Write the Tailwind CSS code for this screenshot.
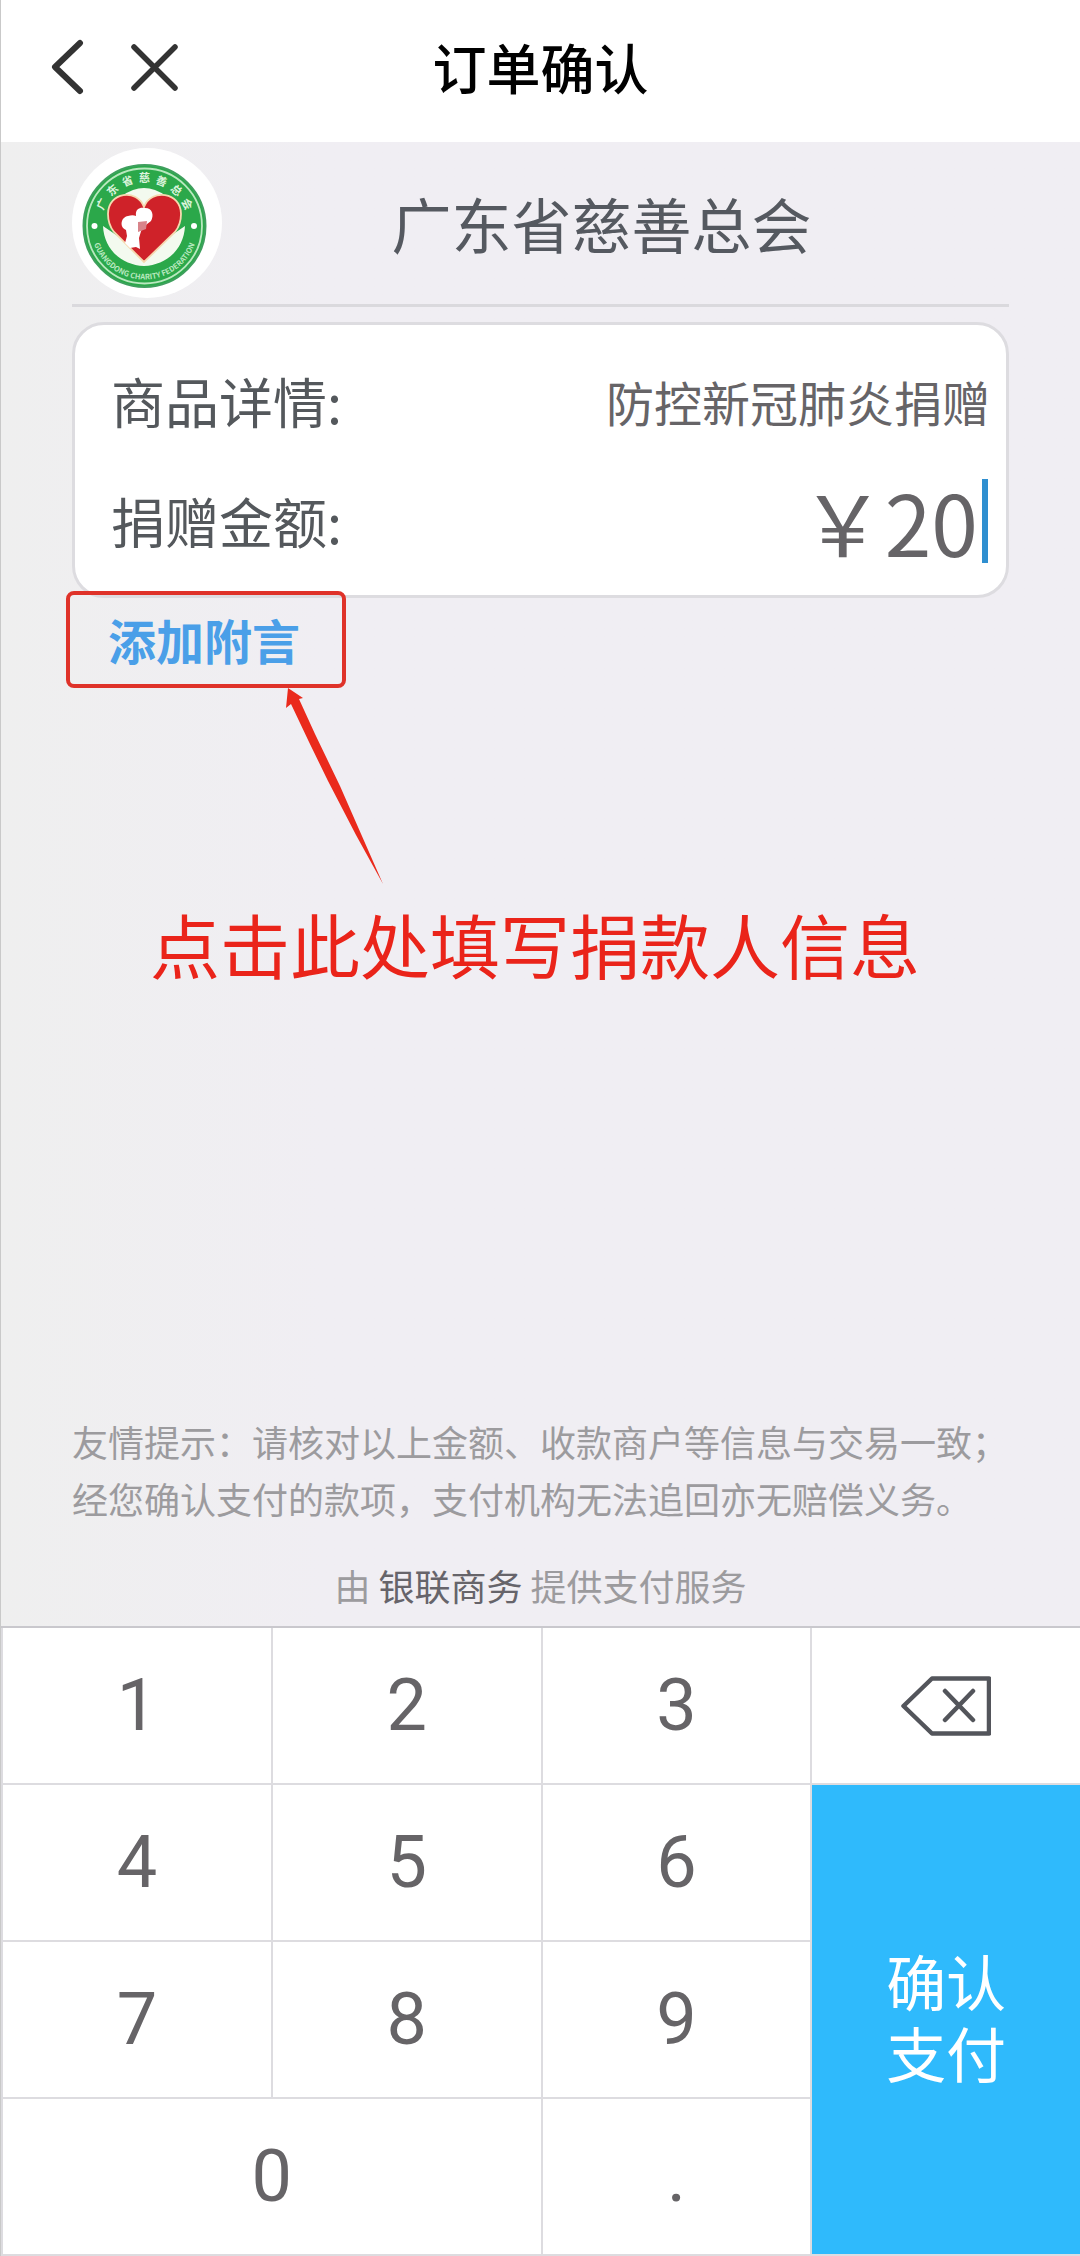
<!DOCTYPE html>
<html lang="zh-CN">
<head>
<meta charset="utf-8">
<meta name="viewport" content="width=device-width, initial-scale=1">
<title>订单确认</title>
<script src="https://cdn.jsdelivr.net/npm/@tailwindcss/browser@4"></script>
</head>
<body class="flex min-h-screen flex-col border-l border-[#c9c9c9] bg-linear-to-r from-[#efefef] to-[#f0eef3] to-30% font-['Noto_Sans_CJK_SC',sans-serif]">

<header class="grid h-[142px] grid-cols-[1fr_auto_1fr] items-center bg-white pb-2">
  <div class="flex items-center gap-[45px] pl-12">
    <button type="button" aria-label="返回">
      <svg class="h-14 w-9" viewBox="0 0 36 56" fill="none" stroke="#333" stroke-width="6" stroke-linecap="round" stroke-linejoin="round"><path d="M31 4 6 28l25 24"/></svg>
    </button>
    <button type="button" aria-label="关闭">
      <svg class="h-12 w-12" viewBox="0 0 48 48" fill="none" stroke="#333" stroke-width="5.500" stroke-linecap="round"><path d="M4 4l41 41M45 4 4 45"/></svg>
    </button>
  </div>
  <h1 class="text-[54px] font-medium leading-[72px] text-black">订单确认</h1>
</header>

<main class="flex flex-1 flex-col px-[71px] pt-1.5">
  <div class="flex items-center border-b-3 border-[#dad9dd] pb-1.5">
    <svg class="h-[150px] w-[150px]" viewBox="0 0 150 150" role="img" aria-label="广东省慈善总会会徽">
      <defs>
        <path id="arcTop" d="M28.500 78a44 44 0 0 1 88 0"/>
        <path id="arcBottom" d="M19 78a53.500 53.500 0 0 0 107 0"/>
      </defs>
      <circle cx="75" cy="75" r="75" fill="#fff"/>
      <circle cx="72.500" cy="78" r="61" fill="#2ba84a" stroke="#3f9f5e" stroke-width="2"/>
      <circle cx="72.500" cy="78" r="57.500" fill="none" stroke="#b9e8bf" stroke-width="1.800"/>
      <path d="M31 78c1 23 18 39 41 40 23-1 40-17 41-40L72 106z" fill="#f3faef"/>
      <path d="M50 48q22-16 44 0L72 60z" fill="#f3faef"/>
      <path d="M72 114 42 84c-4-5-6-11-6-18 0-22 29-26 36-7 7-19 37-15 37 7 0 7-2 13-6 18z" fill="#cf2229" stroke="#f6d9b0" stroke-width="1.800"/>
      <path d="M64 68c-1-8 5-9 9-8 8 0 9 8 6 13l-9 7-3 10 1 11-4-2-6 1-5-5 2-7-1-6c-7-3-5-13 2-14 3-1 6-1 8 0z" fill="#fff"/>
      <path d="M66 74l9-1-1 8-8 3z" fill="#d8848a"/>
      <circle cx="22.500" cy="78" r="3" fill="#fff"/><circle cx="122" cy="78" r="3" fill="#fff"/>
      <text font-size="11" font-weight="700" fill="#dcf4dc" text-anchor="middle"><textPath href="#arcTop" startOffset="50%">广&#160; 东&#160; 省&#160; 慈&#160; 善&#160; 总&#160; 会</textPath></text>
      <text font-size="7.500" font-weight="700" fill="#b9e8bf" text-anchor="middle"><textPath href="#arcBottom" startOffset="50%">GUANGDONG CHARITY FEDERATION</textPath></text>
    </svg>
    <h2 class="flex-1 pr-7 text-center text-[60px] leading-[80px] text-[#555960]">广东省慈善总会</h2>
  </div>

  <section class="mt-[15px] rounded-[32px] border-3 border-[#dddce0] bg-white pb-3.5 pl-9 pr-4 pt-4">
    <div class="flex h-[120px] items-center justify-between">
      <span class="text-[54px] leading-[72px] text-[#54585c]">商品详情:</span>
      <span class="text-5xl leading-[72px] text-[#666467]">防控新冠肺炎捐赠</span>
    </div>
    <div class="flex h-[120px] items-center">
      <label for="amount" class="text-[54px] leading-[72px] text-[#54585c]">捐赠金额:</label>
      <input id="amount" type="text" value="￥20" readonly class="h-[120px] min-w-0 flex-1 text-right text-[84px] text-[#666467] outline-none">
      <span class="ml-1 mr-0.5 h-[84px] w-1.5 bg-[#2f8fd0]"></span>
    </div>
  </section>

  <button type="button" class="-ml-1.5 -mt-[7px] h-[97px] w-[280px] rounded-lg border-4 border-[#df3229] pb-0.5 pl-[38px] text-left text-5xl font-bold leading-[72px] text-[#4a9fe8]">添加附言</button>
  <svg class="ml-[213px] h-[196px] w-[98px]" viewBox="0 0 98 196" fill="#ea2a1c" aria-hidden="true"><path d="M3 0 18 10l-4 1 16 35 25 52 43 98-27-49-28-54-19-39L6 16l-5 4z"/></svg>
  <p class="ml-[78px] mt-5 whitespace-nowrap text-[70px] leading-[80px] text-[#ea241a]">点击此处填写捐款人信息</p>

  <footer class="mt-auto pb-[13px] text-4xl text-[#9c9b9e]">
    <p class="leading-[57px]">友情提示：请核对以上金额、收款商户等信息与交易一致；<br>经您确认支付的款项，支付机构无法追回亦无赔偿义务。</p>
    <p class="mt-[30px] text-center leading-[56px]">由 <span class="text-[#66646a]">银联商务</span> 提供支付服务</p>
  </footer>
</main>

<div class="grid auto-rows-[155px] grid-cols-4 gap-0.5 border-t-2 border-[#c9c8cd] bg-[#dddce0] pb-0.5 pl-0.5 font-['Roboto',sans-serif] text-7xl text-[#666467]">
  <button type="button" class="bg-white">1</button>
  <button type="button" class="bg-white">2</button>
  <button type="button" class="bg-white">3</button>
  <button type="button" aria-label="删除" class="flex items-center justify-center bg-white">
    <svg class="h-[60px] w-[90px]" viewBox="0 0 90 60" fill="none" stroke="#53555b" stroke-width="4.500" stroke-linecap="round" stroke-linejoin="round"><path d="M2.500 30 31 2.500h57v55H31zM44 15l28 29M72 15 44 44"/></svg>
  </button>
  <button type="button" class="bg-white">4</button>
  <button type="button" class="bg-white">5</button>
  <button type="button" class="bg-white">6</button>
  <button type="button" class="row-span-3 bg-[#2fbafc] pb-2 font-['Noto_Sans_CJK_SC',sans-serif] text-[60px] leading-[72px] text-white">确认<br>支付</button>
  <button type="button" class="bg-white">7</button>
  <button type="button" class="bg-white">8</button>
  <button type="button" class="bg-white">9</button>
  <button type="button" class="col-span-2 bg-white">0</button>
  <button type="button" class="bg-white">.</button>
</div>
</body>
</html>
